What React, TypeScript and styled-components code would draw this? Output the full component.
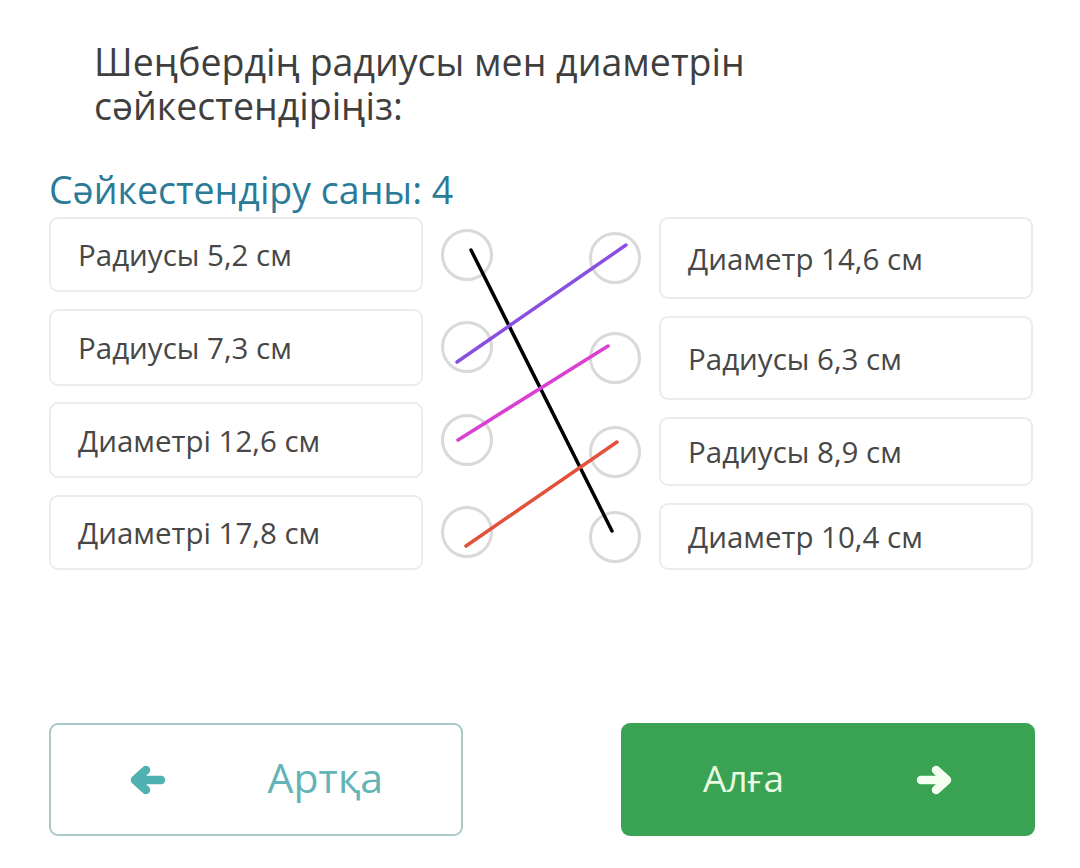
import React from "react";
import styled, { createGlobalStyle } from "styled-components";

const GlobalStyle = createGlobalStyle`
  html, body { margin: 0; padding: 0; background: #ffffff; }
  body { font-family: "Open Sans", "Noto Sans", sans-serif; }
  * { box-sizing: border-box; }
`;

const Page = styled.div`
  width: 1080px;
  height: 868px;
  padding: 40px 45px 0 49px;
  display: flex;
  flex-direction: column;
  overflow: hidden;
`;

const Title = styled.h1`
  margin: 0 0 0 45px;
  font-size: 37.5px;
  line-height: 44px;
  font-weight: 400;
  color: #3f3f3f;
  width: 720px;
`;

const Subtitle = styled.h2`
  margin: 40px 0 0 0;
  font-size: 37.5px;
  line-height: 44px;
  font-weight: 400;
  color: #2b7b98;
`;

const MatchArea = styled.div`
  position: relative;
  margin-top: 5px;
  display: flex;
  gap: 96px;
`;

const Side = styled.div<{ $gaps: number }>`
  display: flex;
  flex-direction: column;
  gap: ${(p) => p.$gaps}px;
  width: 444px;
`;

const Row = styled.div<{ $h: number; $reverse?: boolean }>`
  display: flex;
  flex-direction: ${(p) => (p.$reverse ? "row-reverse" : "row")};
  align-items: center;
  justify-content: space-between;
  height: ${(p) => p.$h}px;
`;

const Card = styled.div`
  width: 374px;
  height: 100%;
  display: flex;
  align-items: center;
  padding-left: 27px;
  border: 2px solid #ececec;
  border-radius: 9px;
  font-size: 29.5px;
  color: #474747;
  background: #fff;
`;

const Dot = styled.div`
  width: 52px;
  height: 52px;
  border-radius: 50%;
  border: 3px solid #d9d9d9;
  flex: none;
`;

const Lines = styled.svg`
  position: absolute;
  left: 0;
  top: 0;
  pointer-events: none;
  overflow: visible;
`;

const ButtonRow = styled.div`
  margin-top: auto;
  margin-bottom: 32px;
  display: flex;
  justify-content: space-between;
  width: 986px;
`;

const NavButton = styled.button<{ $primary?: boolean }>`
  width: 414px;
  height: 113px;
  border-radius: 9px;
  display: flex;
  align-items: center;
  justify-content: space-between;
  font-family: "Open Sans", sans-serif;
  font-size: ${(p) => (p.$primary ? "37px" : "41px")};
  padding: ${(p) => (p.$primary ? "0 82px 0 82px" : "0 78px 0 78px")};
  border: ${(p) => (p.$primary ? "none" : "2px solid #a9c9c9")};
  background: ${(p) => (p.$primary ? "#3aa253" : "#ffffff")};
  color: ${(p) => (p.$primary ? "#e9fbe3" : "#62b4b6")};
  cursor: pointer;
  span { line-height: 1; padding-bottom: 4px; }
`;

const ArrowSvg = styled.svg<{ $color: string }>`
  width: 37px;
  height: 30px;
  color: ${(p) => p.$color};
  flex: none;
`;

function Arrow({ dir, color }: { dir: "left" | "right"; color: string }) {
  return (
    <ArrowSvg $color={color} viewBox="0 0 37 30" style={dir === "right" ? { transform: "scaleX(-1)" } : undefined}>
      <path
        d="M32 15 H7 M17 5 L6 15 L17 25"
        fill="none"
        stroke="currentColor"
        strokeWidth={8.5}
        strokeLinecap="round"
        strokeLinejoin="round"
      />
    </ArrowSvg>
  );
}

const left = [
  { t: "Радиусы 5,2 см", h: 75 },
  { t: "Радиусы 7,3 см", h: 77 },
  { t: "Диаметрі 12,6 см", h: 76 },
  { t: "Диаметрі 17,8 см", h: 75 },
];
const right = [
  { t: "Диаметр 14,6 см", h: 82 },
  { t: "Радиусы 6,3 см", h: 84 },
  { t: "Радиусы 8,9 см", h: 69 },
  { t: "Диаметр 10,4 см", h: 67 },
];

const lines = [
  { x1: 422, y1: 33, x2: 563, y2: 314, c: "#000000" },
  { x1: 408, y1: 145, x2: 577, y2: 28, c: "#8a4fe0" },
  { x1: 409, y1: 223, x2: 559, y2: 129, c: "#d83fd2" },
  { x1: 417, y1: 329, x2: 568, y2: 225, c: "#e2523a" },
];

export default function App() {
  return (
    <>
      <GlobalStyle />
      <Page>
        <Title>Шеңбердің радиусы мен диаметрін сәйкестендіріңіз:</Title>
        <Subtitle>Сәйкестендіру саны: 4</Subtitle>
        <MatchArea>
          <Side $gaps={16.5}>
            {left.map((r) => (
              <Row key={r.t} $h={r.h}>
                <Card>{r.t}</Card>
                <Dot />
              </Row>
            ))}
          </Side>
          <Side $gaps={17}>
            {right.map((r) => (
              <Row key={r.t} $h={r.h} $reverse>
                <Card>{r.t}</Card>
                <Dot />
              </Row>
            ))}
          </Side>
          <Lines width="986" height="360">
            {lines.map((l, i) => (
              <line key={i} x1={l.x1} y1={l.y1} x2={l.x2} y2={l.y2} stroke={l.c} strokeWidth={3.5} strokeLinecap="round" />
            ))}
          </Lines>
        </MatchArea>
        <ButtonRow>
          <NavButton>
            <Arrow dir="left" color="#50b1b3" />
            <span>Артқа</span>
          </NavButton>
          <NavButton $primary>
            <span>Алға</span>
            <Arrow dir="right" color="#f4fff2" />
          </NavButton>
        </ButtonRow>
      </Page>
    </>
  );
}
